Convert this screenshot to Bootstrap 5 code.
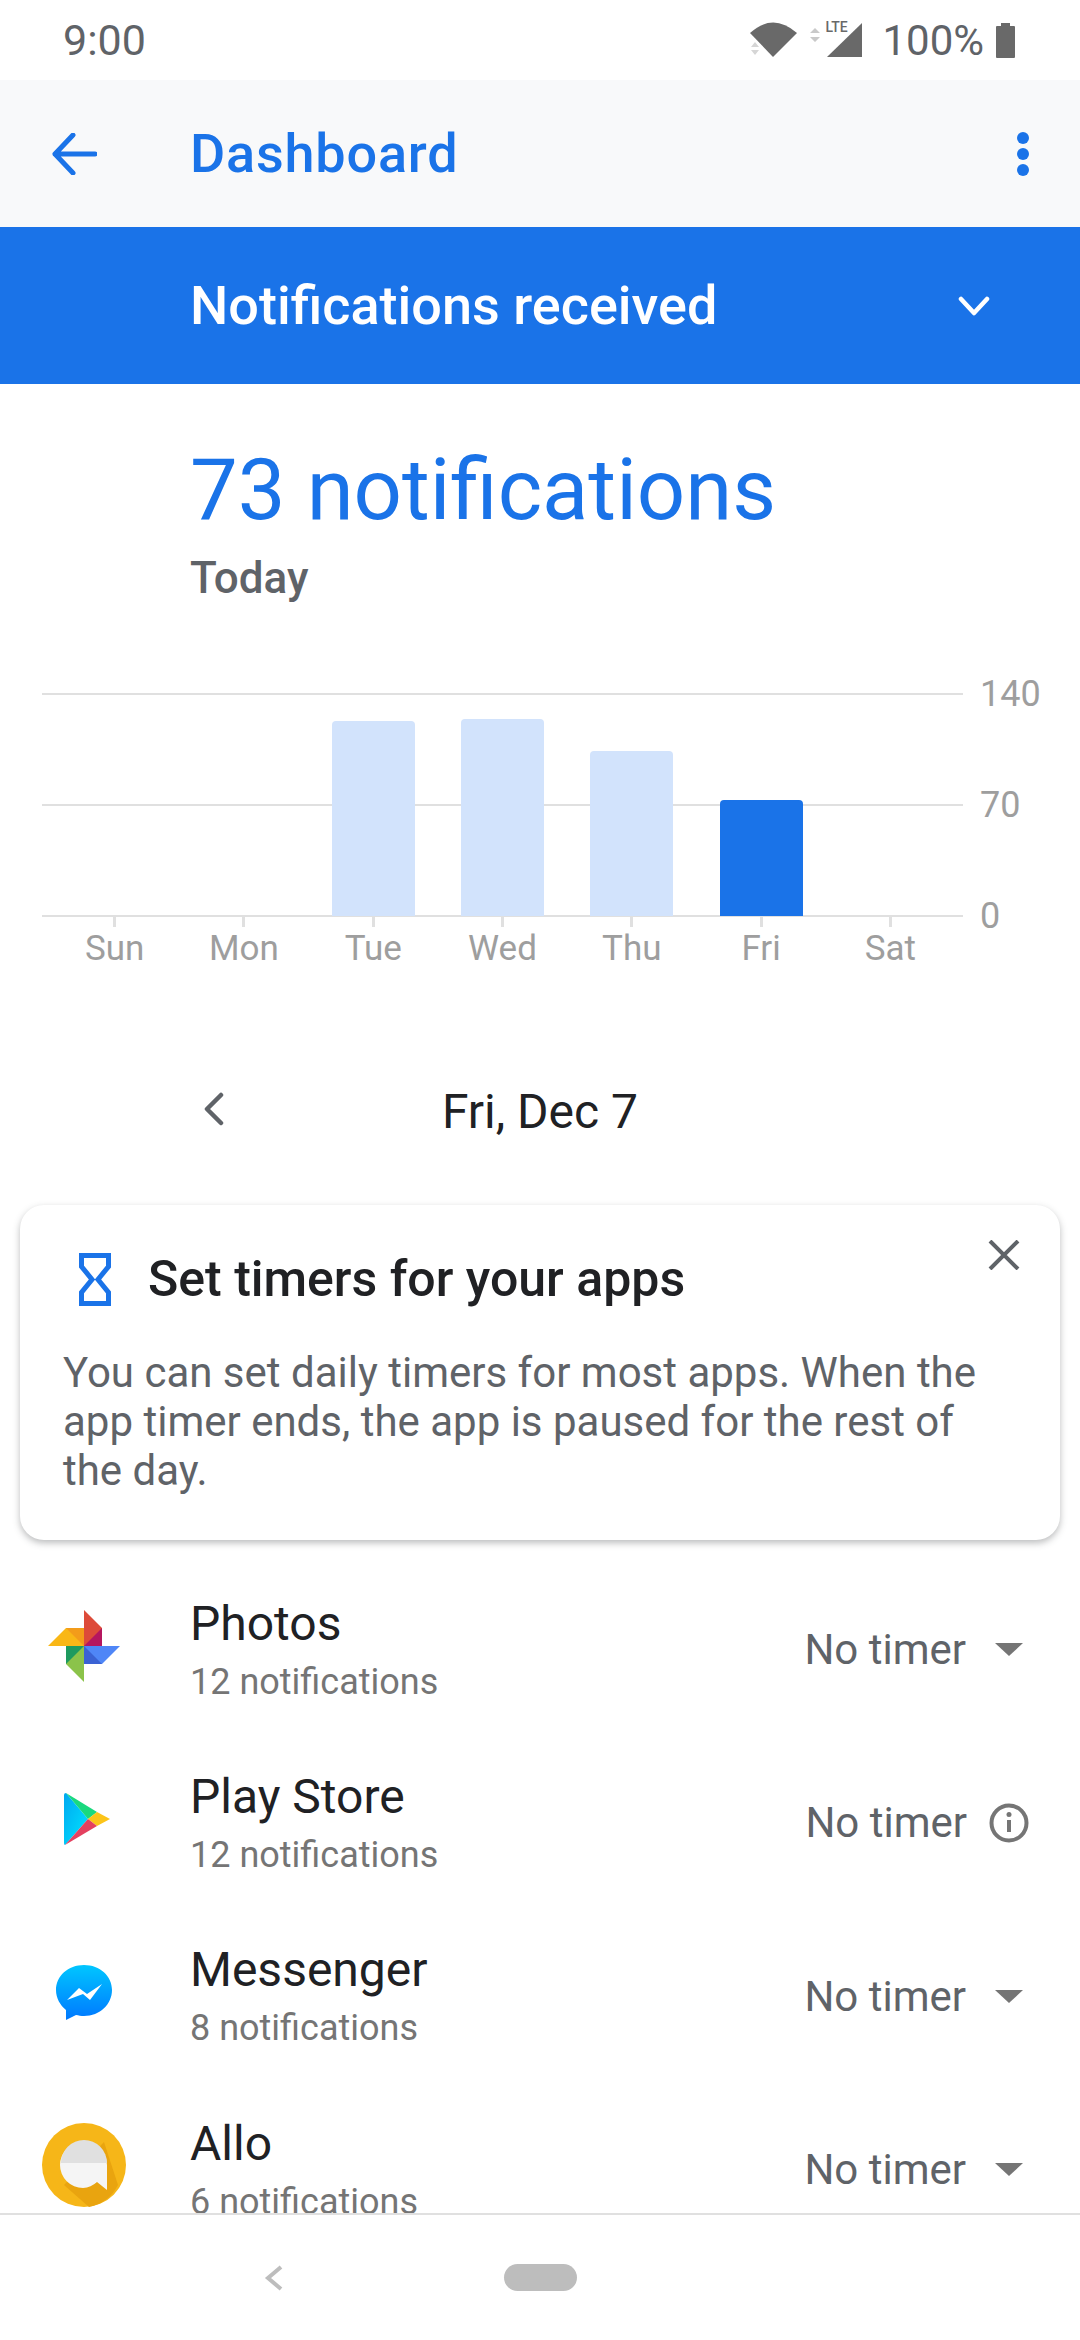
<!DOCTYPE html>
<html>
<head>
    <title>Dashboard</title>
    <link href="https://cdn.jsdelivr.net/npm/bootstrap@5.3.0/dist/css/bootstrap.min.css" rel="stylesheet">
    <style>
        body { font-family: Roboto, "Liberation Sans", sans-serif; background: #fff; }

        .phone { width: 1080px; height: 2340px; overflow: hidden; }

        .status-bar { height: 80px; padding: 0 65px 0 63px; color: #5f6368; }
        .status-time { font-size: 43px; }
        .status-batt { font-size: 42px; margin: 0 12px 0 22px; }
        .signal-box { width: 112px; height: 36px; margin-right: -2px; }
        .lte-text { left: 75px; top: -3px; font-size: 14px; line-height: 16px; font-weight: 500; color: #696969; }

        .app-bar { height: 147px; background: #f8f9fa; color: #1a73e8; padding: 0 50px 0 52px; }
        .app-title { font-size: 54px; font-weight: 500; margin-left: 93px; letter-spacing: .8px; }

        .band { height: 157px; background: #1a73e8; color: #fff; padding: 0 90px 0 190px; }
        .band-title { font-size: 54px; font-weight: 500; }

        .head-block { padding: 64px 0 0 190px; height: 309px; }
        .head-num { font-size: 85px; line-height: 84px; color: #1a73e8; }
        .head-day { font-size: 44px; line-height: 50px; font-weight: 500; color: #5f6368; margin-top: 21px; }

        .chart-wrap { padding-left: 42px; height: 290px; }
        .plot { width: 921px; height: 223px; }
        .grid-line { left: 0; right: 0; height: 2px; background: #e0e0e0; }
        .grid-num { left: 938px; font-size: 36px; line-height: 40px; color: #9e9e9e; transform: translateY(-19px); }
        .days { width: 905px; margin-left: 8px; }
        .day-col { width: 129.300px; }
        .day-plot { height: 223px; }
        .bar-day { width: 83px; background: #d2e3fc; border-radius: 4px 4px 0 0; position: relative; }
        .bar-day.now { background: #1a73e8; }
        .tick { width: 3px; height: 11px; background: #e0e0e0; }
        .day-name { font-size: 35px; line-height: 40px; color: #9e9e9e; margin-top: 2px; }

        .date-row { height: 90px; margin-top: 84px; }
        .date-arrow { left: 202px; top: 25px; }
        .date-text { font-size: 48px; color: #202124; }

        .tip-card { margin: 48px 20px 0; height: 335px; border: 0; border-radius: 24px; box-shadow: 0 3px 7px rgba(60, 64, 67, .35); padding: 46px 43px 0; }
        .tip-close { right: 40px; top: 35px; }
        .tip-title { font-size: 50px; font-weight: 500; color: #202124; line-height: 56px; margin-left: 37px; }
        .tip-text { font-size: 42px; line-height: 49px; color: #5f6368; margin: 41px 20px 0 0; }
        .tip-icon { margin-left: 16px; }

        .app-list { height: 650px; overflow: hidden; margin-top: 23px; }
        .app-row { height: 173.300px; padding-right: 56px; }
        .app-icon { width: 190px; }
        .app-icon svg { margin-top: -7px; }
        .app-icon .allo-logo { margin-top: -10px; }
        .app-name { font-size: 48px; line-height: 56px; color: #202124; }
        .app-sub { font-size: 36px; line-height: 44px; color: #757575; margin-top: 8px; }
        .timer { font-size: 42px; color: #5f6368; }
        .caret-down { width: 0; height: 0; border-left: 14px solid transparent; border-right: 14px solid transparent; border-top: 13px solid #757575; margin: 0 1px 0 29px; }
        .info-mark { margin: 0 -5px 0 22px; }

        .nav-bottom { height: 127px; border-top: 2px solid #e0e0e0; background: #fff; }
        .nav-back { left: 264px; top: 50px; }
        .nav-pill { width: 73px; height: 27px; border-radius: 14px; background: #bdbdbd; }
    </style>
</head>
<body>
<div class="phone d-flex flex-column">

    <div class="status-bar d-flex flex-shrink-0 align-items-center justify-content-between">
        <span class="status-time">9:00</span>
        <div class="d-flex align-items-center">
            <div class="signal-box position-relative">
                <svg class="d-block" width="112" height="36" viewBox="0 0 112 36">
                    <path d="M0 11 Q23 -10 47 11 L23 35 Z" fill="#696969"/>
                    <path d="M1 25l4-5 4 5zM1 28l4 5 4-5z" fill="#d6d6d6"/>
                    <path d="M60 11l5-5 5 5zM60 15l5 5 5-5z" fill="#c9c9c9"/>
                    <path d="M77 35 L112 1 V35 Z" fill="#696969"/>
                </svg>
                <span class="lte-text position-absolute">LTE</span>
            </div>
            <span class="status-batt">100%</span>
            <svg width="19" height="35" viewBox="0 0 19 35"><path d="M5 0h9v3h4a1 1 0 0 1 1 1v30a1 1 0 0 1-1 1H1a1 1 0 0 1-1-1V4a1 1 0 0 1 1-1h4z" fill="#696969"/></svg>
        </div>
    </div>

    <div class="app-bar d-flex flex-shrink-0 align-items-center">
        <svg width="45" height="42" viewBox="0 0 45 42" fill="none" stroke="#1a73e8" stroke-width="5" stroke-linecap="round" stroke-linejoin="round"><path d="M43 21H3M21 2L3 21l18 19"/></svg>
        <span class="app-title flex-grow-1">Dashboard</span>
        <svg width="14" height="46" viewBox="0 0 14 46" fill="#1a73e8"><circle cx="7" cy="7" r="6"/><circle cx="7" cy="23" r="6"/><circle cx="7" cy="39" r="6"/></svg>
    </div>

    <div class="band d-flex flex-shrink-0 align-items-center justify-content-between">
        <span class="band-title">Notifications received</span>
        <svg width="32" height="22" viewBox="0 0 32 22" fill="none" stroke="#fff" stroke-width="4.500" stroke-linecap="round" stroke-linejoin="round"><path d="M3 4l13 14L29 4"/></svg>
    </div>

    <div class="head-block flex-shrink-0">
        <div class="head-num">73 notifications</div>
        <div class="head-day">Today</div>
    </div>

    <div class="chart-wrap flex-shrink-0">
        <div class="plot position-relative">
            <div class="grid-line position-absolute top-0"></div>
            <div class="grid-line position-absolute" style="top: 111px"></div>
            <div class="grid-line position-absolute" style="top: 222px"></div>
            <span class="grid-num position-absolute" style="top: 0">140</span>
            <span class="grid-num position-absolute" style="top: 111px">70</span>
            <span class="grid-num position-absolute" style="top: 222px">0</span>
            <div class="days d-flex position-relative">
                <div class="day-col d-flex flex-column align-items-center"><div class="day-plot d-flex align-items-end"></div><div class="tick"></div><div class="day-name">Sun</div></div>
                <div class="day-col d-flex flex-column align-items-center"><div class="day-plot d-flex align-items-end"></div><div class="tick"></div><div class="day-name">Mon</div></div>
                <div class="day-col d-flex flex-column align-items-center"><div class="day-plot d-flex align-items-end"><div class="bar-day" style="height: 195px"></div></div><div class="tick"></div><div class="day-name">Tue</div></div>
                <div class="day-col d-flex flex-column align-items-center"><div class="day-plot d-flex align-items-end"><div class="bar-day" style="height: 197px"></div></div><div class="tick"></div><div class="day-name">Wed</div></div>
                <div class="day-col d-flex flex-column align-items-center"><div class="day-plot d-flex align-items-end"><div class="bar-day" style="height: 165px"></div></div><div class="tick"></div><div class="day-name">Thu</div></div>
                <div class="day-col d-flex flex-column align-items-center"><div class="day-plot d-flex align-items-end"><div class="bar-day now" style="height: 116px"></div></div><div class="tick"></div><div class="day-name">Fri</div></div>
                <div class="day-col d-flex flex-column align-items-center"><div class="day-plot d-flex align-items-end"></div><div class="tick"></div><div class="day-name">Sat</div></div>
            </div>
        </div>
    </div>

    <div class="date-row flex-shrink-0 position-relative d-flex align-items-center justify-content-center">
        <svg class="date-arrow position-absolute" width="24" height="34" viewBox="0 0 24 34" fill="none" stroke="#5f6368" stroke-width="4.500" stroke-linecap="round" stroke-linejoin="round"><path d="M19 3L5 17l14 14"/></svg>
        <span class="date-text">Fri, Dec 7</span>
    </div>

    <div class="card tip-card flex-shrink-0 position-relative">
        <svg class="tip-close position-absolute" width="32" height="30" viewBox="0 0 32 30" fill="none" stroke="#5f6368" stroke-width="4"><path d="M2 1l28 28M30 1L2 29"/></svg>
        <div class="d-flex align-items-center">
            <svg class="tip-icon" width="32" height="53" viewBox="0 0 32 53" fill="none" stroke="#1a73e8" stroke-width="5"><path d="M2.500 2.500h27v11L19 26.500l10.500 13v11h-27v-11L13 26.500 2.500 13.500z"/></svg>
            <span class="tip-title">Set timers for your apps</span>
        </div>
        <p class="tip-text">You can set daily timers for most apps. When the app timer ends, the app is paused for the rest of the day.</p>
    </div>

    <div class="app-list flex-shrink-0">
        <div class="app-row d-flex align-items-center">
            <div class="app-icon d-flex ps-5">
                <svg width="72" height="72" viewBox="0 0 72 72">
                    <path d="M36 0l18 18v18H36z" fill="#dd4b39"/><path d="M36 36l18-18v18z" fill="#b5165f"/>
                    <path d="M0 36l18-18h18v18z" fill="#f9b716"/><path d="M18 18h18v18z" fill="#f39c1a"/>
                    <path d="M36 72L18 54V36h18z" fill="#8bc34a"/><path d="M18 54V36h18z" fill="#1e9a5f"/>
                    <path d="M72 36L54 54H36V36z" fill="#4f86f7"/><path d="M36 54V36l18 18z" fill="#3a62d4"/>
                </svg>
            </div>
            <div class="flex-grow-1">
                <div class="app-name">Photos</div>
                <div class="app-sub">12 notifications</div>
            </div>
            <div class="timer d-flex align-items-center">No timer<span class="caret-down"></span></div>
        </div>
        <div class="app-row d-flex align-items-center">
            <div class="app-icon d-flex">
                <svg width="110" height="52" viewBox="-64 0 110 52">
                    <defs><linearGradient id="playGrad" x1="0" y1="0" x2="1" y2="1"><stop offset="0" stop-color="#00a8f0"/><stop offset="1" stop-color="#00e5ff"/></linearGradient></defs>
                    <path d="M0 2Q0 0 2 0L24 26 1 52Q0 52 0 50Z" fill="url(#playGrad)"/>
                    <path d="M2 0L33 19 24 26Z" fill="#19d97e"/>
                    <path d="M33 19L46 26 33 33 24 26Z" fill="#fcc419"/>
                    <path d="M1 52L24 26 33 33Z" fill="#e4405f"/>
                </svg>
            </div>
            <div class="flex-grow-1">
                <div class="app-name">Play Store</div>
                <div class="app-sub">12 notifications</div>
            </div>
            <div class="timer d-flex align-items-center">No timer
                <svg class="info-mark" width="40" height="40" viewBox="0 0 40 40" fill="none"><circle cx="20" cy="20" r="17.500" stroke="#757575" stroke-width="4"/><path d="M20 17v12" stroke="#757575" stroke-width="4"/><circle cx="20" cy="11.500" r="2.500" fill="#757575"/></svg>
            </div>
        </div>
        <div class="app-row d-flex align-items-center">
            <div class="app-icon d-flex">
                <svg width="112" height="56" viewBox="-56 0 112 56">
                    <defs><linearGradient id="msgGrad" x1="0" y1="0" x2="0" y2="1"><stop offset="0" stop-color="#00c6ff"/><stop offset="1" stop-color="#0078ff"/></linearGradient></defs>
                    <path d="M28 0C12 0 0 11 0 25c0 8 4 15 10 20v10l10-5c2.500 .5 5 1 8 1 16 0 28-12 28-26S44 0 28 0z" fill="url(#msgGrad)"/>
                    <path d="M11 35l12-12 8 6 15-10-12 16-7-6z" fill="#fff"/>
                </svg>
            </div>
            <div class="flex-grow-1">
                <div class="app-name">Messenger</div>
                <div class="app-sub">8 notifications</div>
            </div>
            <div class="timer d-flex align-items-center">No timer<span class="caret-down"></span></div>
        </div>
        <div class="app-row d-flex align-items-center">
            <div class="app-icon d-flex">
                <svg class="allo-logo" width="126" height="84" viewBox="-42 0 126 84">
                    <circle cx="42" cy="42" r="42" fill="#f6b618"/>
                    <path d="M62 19L76 62A42 42 0 0 1 47 84L22 62z" fill="#e9a40f"/>
                    <path d="M41 19a23 23 0 0 1 24 23v25l-10-8a23 23 0 0 1-14 6 23 23 0 0 1 0-46z" fill="#f5f5f5"/>
                    <path d="M19 40a23 23 0 0 1 46 0z" fill="#e0e0e0"/>
                </svg>
            </div>
            <div class="flex-grow-1">
                <div class="app-name">Allo</div>
                <div class="app-sub">6 notifications</div>
            </div>
            <div class="timer d-flex align-items-center">No timer<span class="caret-down"></span></div>
        </div>
    </div>

    <div class="nav-bottom flex-shrink-0 position-relative d-flex align-items-center justify-content-center">
        <svg class="nav-back position-absolute" width="20" height="26" viewBox="0 0 20 26" fill="none" stroke="#bdbdbd" stroke-width="4"><path d="M17 2L4 13l13 11"/></svg>
        <div class="nav-pill"></div>
    </div>
</div>
</body>
</html>
